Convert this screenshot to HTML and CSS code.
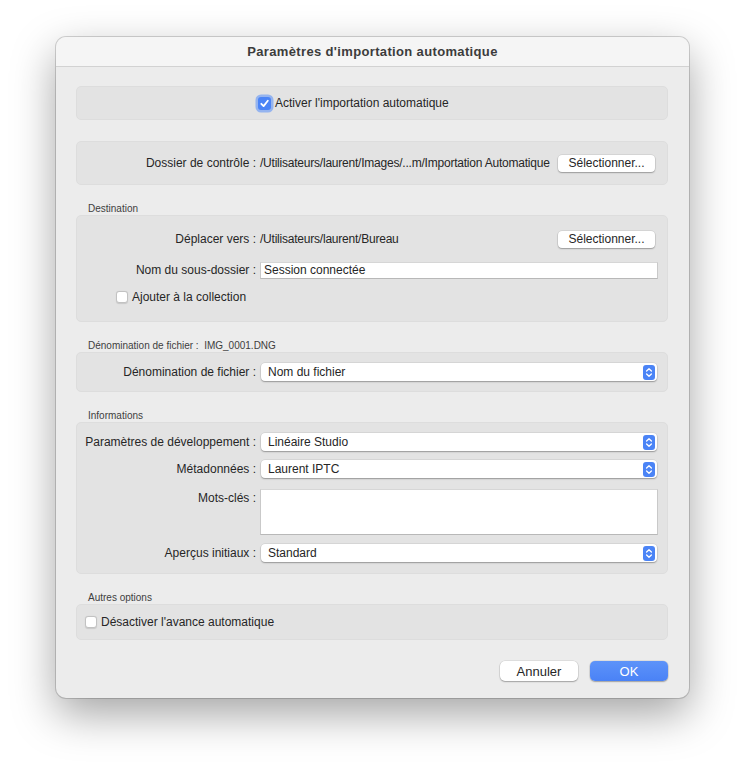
FILE: index.html
```html
<!DOCTYPE html>
<html lang="fr">
<head>
    <meta charset="UTF-8">
    <meta name="viewport" content="width=device-width, initial-scale=1.0">
    <title>Paramètres d'importation automatique</title>
    <link rel="stylesheet" href="styles.css">
</head>
<body>
    <div class="window">
        <div class="titlebar">Paramètres d'importation automatique</div>
        <div class="content">

            <div class="box box-toggle">
                <div class="row">
                    <span class="row-label"></span>
                    <label class="check">
                        <span class="checkbox checked">
                            <svg width="13" height="13" viewBox="0 0 13 13"><path d="M3.3 6.8 L5.6 9.1 L9.8 3.8" fill="none" stroke="#fff" stroke-width="1.8" stroke-linecap="round" stroke-linejoin="round"/></svg>
                        </span>
                        Activer l'importation automatique
                    </label>
                </div>
            </div>

            <div class="box box-folder">
                <div class="row">
                    <span class="row-label">Dossier de contrôle :</span>
                    <div class="control path">
                        <span class="path-text">/Utilisateurs/laurent/Images/...m/Importation Automatique</span>
                        <button class="btn small">Sélectionner...</button>
                    </div>
                </div>
            </div>

            <div class="section">
                <div class="section-title">Destination</div>
                <div class="box box-dest">
                    <div class="row">
                        <span class="row-label">Déplacer vers :</span>
                        <div class="control path">
                            <span class="path-text">/Utilisateurs/laurent/Bureau</span>
                            <button class="btn small">Sélectionner...</button>
                        </div>
                    </div>
                    <div class="row loose">
                        <span class="row-label">Nom du sous-dossier :</span>
                        <div class="control"><div class="field">Session connectée</div></div>
                    </div>
                    <div class="row indent">
                        <label class="check"><span class="checkbox"></span>Ajouter à la collection</label>
                    </div>
                </div>
            </div>

            <div class="section">
                <div class="section-title">Dénomination de fichier :&nbsp; IMG_0001.DNG</div>
                <div class="box box-single">
                    <div class="row">
                        <span class="row-label">Dénomination de fichier :</span>
                        <div class="control">
                            <div class="select">Nom du fichier
                                <svg class="stepper" width="12" height="15" viewBox="0 0 12 15"><rect width="12" height="15" rx="3" fill="#4b84f6"/><path d="M3.6 6 L6 3.7 L8.4 6 M3.6 9 L6 11.3 L8.4 9" fill="none" stroke="#fff" stroke-width="1.3" stroke-linecap="round" stroke-linejoin="round"/></svg>
                            </div>
                        </div>
                    </div>
                </div>
            </div>

            <div class="section">
                <div class="section-title">Informations</div>
                <div class="box box-info">
                    <div class="row">
                        <span class="row-label">Paramètres de développement :</span>
                        <div class="control">
                            <div class="select">Linéaire Studio
                                <svg class="stepper" width="12" height="15" viewBox="0 0 12 15"><rect width="12" height="15" rx="3" fill="#4b84f6"/><path d="M3.6 6 L6 3.7 L8.4 6 M3.6 9 L6 11.3 L8.4 9" fill="none" stroke="#fff" stroke-width="1.3" stroke-linecap="round" stroke-linejoin="round"/></svg>
                            </div>
                        </div>
                    </div>
                    <div class="row">
                        <span class="row-label">Métadonnées :</span>
                        <div class="control">
                            <div class="select">Laurent IPTC
                                <svg class="stepper" width="12" height="15" viewBox="0 0 12 15"><rect width="12" height="15" rx="3" fill="#4b84f6"/><path d="M3.6 6 L6 3.7 L8.4 6 M3.6 9 L6 11.3 L8.4 9" fill="none" stroke="#fff" stroke-width="1.3" stroke-linecap="round" stroke-linejoin="round"/></svg>
                            </div>
                        </div>
                    </div>
                    <div class="row tall">
                        <span class="row-label">Mots-clés :</span>
                        <div class="control"><div class="field area"></div></div>
                    </div>
                    <div class="row">
                        <span class="row-label">Aperçus initiaux :</span>
                        <div class="control">
                            <div class="select">Standard
                                <svg class="stepper" width="12" height="15" viewBox="0 0 12 15"><rect width="12" height="15" rx="3" fill="#4b84f6"/><path d="M3.6 6 L6 3.7 L8.4 6 M3.6 9 L6 11.3 L8.4 9" fill="none" stroke="#fff" stroke-width="1.3" stroke-linecap="round" stroke-linejoin="round"/></svg>
                            </div>
                        </div>
                    </div>
                </div>
            </div>

            <div class="section">
                <div class="section-title">Autres options</div>
                <div class="box box-other">
                    <div class="row">
                        <label class="check"><span class="checkbox"></span>Désactiver l'avance automatique</label>
                    </div>
                </div>
            </div>

            <div class="actions">
                <button class="btn wide">Annuler</button>
                <button class="btn wide primary">OK</button>
            </div>
        </div>
    </div>
</body>
</html>
```

FILE: styles.css
```css
html {
    background: #fff;
}
body {
    margin: 0;
    min-height: 773px;
    padding-top: 37px;
    box-sizing: border-box;
    overflow: hidden;
    font-family: "Liberation Sans", Arial, sans-serif;
    font-size: 12px;
    color: #262626;
}
.window {
    margin-left: 56px;
    width: 633px;
    height: 661px;
    box-sizing: border-box;
    background: #ececec;
    border-radius: 10px;
    overflow: hidden;
    box-shadow: 0 0 0 1px rgba(0, 0, 0, 0.16), 0 16px 44px rgba(0, 0, 0, 0.36);
}
.titlebar {
    height: 29px;
    line-height: 29px;
    text-align: center;
    font-weight: bold;
    font-size: 13px;
    letter-spacing: 0.35px;
    color: #3c3c3c;
    background: #f5f5f5;
    border-bottom: 1px solid #d2d2d2;
}
.content {
    padding: 19px 21px 0 20px;
}
.box {
    background: #e3e3e3;
    border: 1px solid #dddddd;
    border-radius: 5px;
    box-sizing: border-box;
}
.box-toggle {
    height: 34px;
    padding: 7px 0;
}
.box-folder {
    height: 44px;
    margin-top: 21px;
    padding: 12px 10px 0 0;
}
.box-dest {
    height: 107px;
    padding: 14px 10px 0 0;
}
.box-single {
    height: 40px;
    padding: 10px 10px 0 0;
}
.box-info {
    height: 152px;
    padding: 10px 10px 0 0;
}
.box-other {
    height: 36px;
    padding: 8px 0 0 8px;
}
.section {
    margin-top: 18px;
}
.section-title {
    font-size: 10px;
    line-height: 12px;
    color: #3e3e3e;
    padding-left: 12px;
}
.row {
    display: flex;
    align-items: center;
    height: 18px;
}
.row + .row {
    margin-top: 9px;
}
.row.loose {
    margin-top: 13px;
}
.row.tall {
    height: 46px;
    align-items: flex-start;
    margin-top: 11px;
}
.row.tall + .row {
    margin-top: 9px;
}
.row.tall .row-label {
    line-height: 18px;
}
.row.indent {
    padding-left: 39px;
}
.row-label {
    width: 179px;
    flex: none;
    text-align: right;
    white-space: nowrap;
}
.control {
    flex: 1;
    min-width: 0;
    margin-left: 4px;
    align-self: stretch;
    display: flex;
    align-items: center;
}
.control.path {
    justify-content: space-between;
}
.path-text {
    white-space: nowrap;
    letter-spacing: -0.22px;
}
.control.path .btn {
    flex: none;
    margin-right: 2px;
}
.check {
    display: flex;
    align-items: center;
    gap: 4px;
    white-space: nowrap;
}
.box-toggle .check {
    margin-left: 2px;
}
.checkbox {
    width: 12px;
    height: 12px;
    box-sizing: border-box;
    background: #fff;
    border: 1px solid #c2c2c2;
    border-radius: 3px;
    box-shadow: 0 0.5px 1px rgba(0, 0, 0, 0.12);
    display: flex;
    align-items: center;
    justify-content: center;
}
.checkbox.checked {
    width: 13px;
    height: 13px;
    background: #4b84f6;
    border: none;
    box-shadow: 0 0 0 2.5px rgba(86, 142, 250, 0.55);
}
.field {
    flex: 1;
    height: 17px;
    box-sizing: border-box;
    background: #fff;
    border: 1px solid #c9c9c9;
    border-top-color: #d6d6d6;
    border-bottom-color: #b8b8b8;
    padding: 0 3px;
    line-height: 15px;
    margin-right: -1px;
}
.field.area {
    height: 46px;
}
.control:has(.area) {
    align-items: flex-start;
}
.select {
    flex: 1;
    height: 18px;
    box-sizing: border-box;
    background: #fff;
    border-radius: 4px;
    box-shadow: 0 0 0 0.5px rgba(0, 0, 0, 0.1), 0 1px 1.5px rgba(0, 0, 0, 0.3);
    padding: 0 2px 0 7px;
    display: flex;
    align-items: center;
    justify-content: space-between;
    margin-left: 1px;
}
.stepper {
    display: block;
}
.btn {
    font-family: inherit;
    font-size: 12px;
    color: #262626;
    background: #fff;
    border: none;
    border-radius: 4px;
    box-shadow: 0 0 0 0.5px rgba(0, 0, 0, 0.12), 0 1px 1.5px rgba(0, 0, 0, 0.28);
    padding: 0;
}
.btn.small {
    width: 97px;
    height: 17px;
}
.btn.wide {
    width: 78px;
    height: 20px;
    font-size: 13px;
    border-radius: 5px;
}
.btn.primary {
    background: linear-gradient(#5d93f9, #4a82f6);
    color: #fff;
}
.actions {
    display: flex;
    justify-content: flex-end;
    gap: 12px;
    margin-top: 21px;
}
```
